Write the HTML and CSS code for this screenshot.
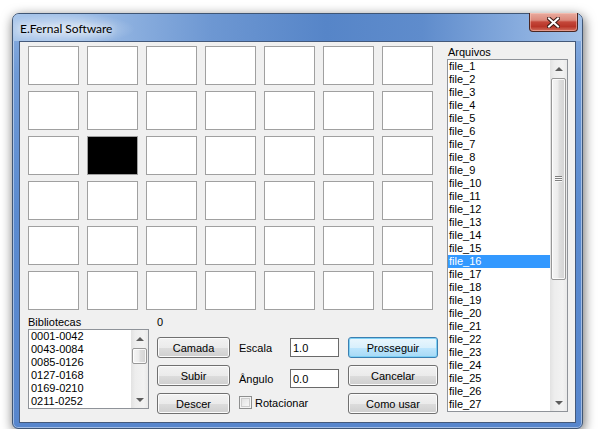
FILE: index.html
```html
<!DOCTYPE html>
<html lang="pt">
<head>
    <meta charset="UTF-8">
    <title>E.Fernal Software</title>
    <link rel="stylesheet" href="styles.css">
</head>
<body>
    <div class="window">
        <div class="titlebar">
            <span class="title">E.Fernal Software</span>
            <div class="close">
                <svg width="13" height="11" viewBox="0 0 13 11">
                    <path d="M2 1.5 L11 9.5 M11 1.5 L2 9.5" stroke="#3a1a16" stroke-width="4" stroke-linecap="square"/>
                    <path d="M2 1.5 L11 9.5 M11 1.5 L2 9.5" stroke="#ffffff" stroke-width="2" stroke-linecap="square"/>
                </svg>
            </div>
        </div>
        <div class="client">
            <div class="main">
                <div class="grid">
                    <div class="cell"></div><div class="cell"></div><div class="cell"></div><div class="cell"></div><div class="cell"></div><div class="cell"></div><div class="cell"></div>
                    <div class="cell"></div><div class="cell"></div><div class="cell"></div><div class="cell"></div><div class="cell"></div><div class="cell"></div><div class="cell"></div>
                    <div class="cell"></div><div class="cell filled"></div><div class="cell"></div><div class="cell"></div><div class="cell"></div><div class="cell"></div><div class="cell"></div>
                    <div class="cell"></div><div class="cell"></div><div class="cell"></div><div class="cell"></div><div class="cell"></div><div class="cell"></div><div class="cell"></div>
                    <div class="cell"></div><div class="cell"></div><div class="cell"></div><div class="cell"></div><div class="cell"></div><div class="cell"></div><div class="cell"></div>
                    <div class="cell"></div><div class="cell"></div><div class="cell"></div><div class="cell"></div><div class="cell"></div><div class="cell"></div><div class="cell"></div>
                </div>

                <div class="bottom">
                    <div class="libs">
                        <div class="label">Bibliotecas</div>
                        <div class="listbox libs-list">
                            <ul class="items">
                                <li>0001-0042</li>
                                <li>0043-0084</li>
                                <li>0085-0126</li>
                                <li>0127-0168</li>
                                <li>0169-0210</li>
                                <li>0211-0252</li>
                            </ul>
                            <div class="scrollbar">
                                <div class="arrow up"></div>
                                <div class="track"><div class="thumb libs-thumb"></div></div>
                                <div class="arrow down"></div>
                            </div>
                        </div>
                    </div>

                    <div class="controls">
                        <div class="label counter">0</div>
                        <div class="control-rows">
                            <div class="col buttons">
                                <button class="btn">Camada</button>
                                <button class="btn">Subir</button>
                                <button class="btn">Descer</button>
                            </div>
                            <div class="col fields">
                                <div class="field">
                                    <span class="field-label">Escala</span>
                                    <input class="textbox" type="text" value="1.0">
                                </div>
                                <div class="field angle">
                                    <span class="field-label">Ângulo</span>
                                    <input class="textbox" type="text" value="0.0">
                                </div>
                                <label class="field check">
                                    <span class="checkbox"></span>
                                    <span>Rotacionar</span>
                                </label>
                            </div>
                            <div class="col buttons wide">
                                <button class="btn default">Prosseguir</button>
                                <button class="btn">Cancelar</button>
                                <button class="btn">Como usar</button>
                            </div>
                        </div>
                    </div>
                </div>
            </div>

            <div class="files">
                <div class="label">Arquivos</div>
                <div class="listbox files-list">
                    <ul class="items">
                        <li>file_1</li>
                        <li>file_2</li>
                        <li>file_3</li>
                        <li>file_4</li>
                        <li>file_5</li>
                        <li>file_6</li>
                        <li>file_7</li>
                        <li>file_8</li>
                        <li>file_9</li>
                        <li>file_10</li>
                        <li>file_11</li>
                        <li>file_12</li>
                        <li>file_13</li>
                        <li>file_14</li>
                        <li>file_15</li>
                        <li class="selected">file_16</li>
                        <li>file_17</li>
                        <li>file_18</li>
                        <li>file_19</li>
                        <li>file_20</li>
                        <li>file_21</li>
                        <li>file_22</li>
                        <li>file_23</li>
                        <li>file_24</li>
                        <li>file_25</li>
                        <li>file_26</li>
                        <li>file_27</li>
                    </ul>
                    <div class="scrollbar">
                        <div class="arrow up"></div>
                        <div class="track"><div class="thumb files-thumb"><span class="grip"></span></div></div>
                        <div class="arrow down"></div>
                    </div>
                </div>
            </div>
        </div>
    </div>
</body>
</html>
```

FILE: styles.css
```css
* {
    margin: 0;
    padding: 0;
    box-sizing: border-box;
}

body {
    background: #ffffff;
    font-family: 'Liberation Sans', Arial, sans-serif;
    font-size: 11px;
    color: #000;
}

/* window frame */
.window {
    margin: 13px 0 0 12px;
    width: 571px;
    height: 416px;
    padding: 0 6px 5px 6px;
    border: 1px solid #3f5675;
    border-radius: 7px 7px 6px 6px;
    background: linear-gradient(to bottom, #8fb2e2 0px, #6f9ad6 60px, #5b8bd0 200px, #5786cd 100%);
    box-shadow: inset 0 0 0 1px rgba(255, 255, 255, 0.45), 1px 3px 12px rgba(0, 0, 0, 0.6);
}

.titlebar {
    height: 27px;
    margin: 0 -6px;
    padding-left: 7px;
    display: flex;
    align-items: flex-start;
    justify-content: space-between;
    border-radius: 6px 6px 0 0;
    background:
        radial-gradient(ellipse 70px 16px at 52px 15px, rgba(255, 255, 255, 0.55), rgba(255, 255, 255, 0) 100%),
        linear-gradient(to right, #a9c6ea 0%, #9dbde6 12%, #6d97d2 35%, #5685c8 55%, #5f8ccc 72%, #8aaedf 90%, #a3c1e8 100%);
}

.title {
    font-family: 'Lato', 'Noto Sans', sans-serif;
    font-size: 12px;
    line-height: 16px;
    margin-top: 7px;
    color: #000;
    text-shadow: 0 0 6px rgba(255, 255, 255, 0.9), 0 0 10px rgba(255, 255, 255, 0.7);
}

.close {
    width: 49px;
    height: 19px;
    margin-top: -1px;
    margin-right: 4px;
    display: flex;
    align-items: center;
    justify-content: center;
    border: 1px solid #4a2622;
    border-top: none;
    border-radius: 0 0 4px 4px;
    background: linear-gradient(to bottom, #e9ab9f 0%, #dc8a7c 40%, #c4473a 50%, #b83528 75%, #d2705f 100%);
    box-shadow: inset 0 0 0 1px rgba(255, 210, 200, 0.45);
}

.close svg {
    display: block;
}

.client {
    height: 382px;
    display: flex;
    border: 1px solid #44597a;
    background: #f0f0f0;
}

/* picture grid + bottom controls */
.main {
    padding: 4px 0 0 8px;
}

.grid {
    display: grid;
    grid-template-columns: repeat(7, 51px);
    grid-auto-rows: 39px;
    column-gap: 8px;
    row-gap: 6px;
}

.cell {
    background: #fff;
    border: 1px solid #a0a0a0;
}

.cell.filled {
    background: #000;
}

.label {
    height: 13px;
    line-height: 13px;
}

.bottom {
    display: flex;
    margin-top: 6px;
}

.libs {
    width: 121px;
    margin-right: 8px;
}

/* list boxes */
.listbox {
    display: flex;
    background: #fff;
    border: 1px solid #8f9399;
    overflow: hidden;
}

.libs-list {
    height: 80px;
}

.items {
    list-style: none;
    flex: 1;
    overflow: hidden;
}

.items li {
    height: 13px;
    line-height: 13px;
    padding-left: 1px;
    white-space: nowrap;
}

.libs-list .items li {
    padding-left: 2px;
}

.items li.selected {
    background: #3399ff;
    color: #fff;
}

.scrollbar {
    width: 17px;
    display: flex;
    flex-direction: column;
    background: linear-gradient(to right, #e2e2e2 0%, #ededed 25%, #f2f2f2 75%, #e9e9e9 100%);
}

.arrow {
    height: 17px;
    display: flex;
    align-items: center;
    justify-content: center;
}

.arrow::before {
    content: '';
    border-left: 4px solid transparent;
    border-right: 4px solid transparent;
}

.arrow.up::before {
    border-bottom: 4px solid #5c5c5c;
}

.arrow.down::before {
    border-top: 4px solid #5c5c5c;
}

.track {
    flex: 1;
    padding: 1px 1px 0 1px;
}

.thumb {
    display: flex;
    align-items: center;
    justify-content: center;
    border: 1px solid #979797;
    border-radius: 2px;
    background: linear-gradient(to right, #f5f5f5 0%, #ececec 45%, #dedede 55%, #d3d3d3 100%);
    box-shadow: inset 0 0 0 1px rgba(255, 255, 255, 0.8);
}

.libs-thumb {
    height: 16px;
}

.files-thumb {
    height: 202px;
}

.grip {
    width: 7px;
    height: 6px;
    background: repeating-linear-gradient(to bottom, #7f7f7f 0px, #7f7f7f 1px, #f8f8f8 1px, #f8f8f8 2px);
}

/* controls */
.controls {
    display: flex;
    flex-direction: column;
}

.counter {
    margin-bottom: 8px;
}

.control-rows {
    display: flex;
    gap: 9px;
}

.col {
    display: flex;
    flex-direction: column;
}

.buttons {
    width: 73px;
    gap: 7px;
}

.buttons.wide {
    width: 90px;
}

.btn {
    height: 21px;
    font-family: 'Liberation Sans', Arial, sans-serif;
    font-size: 11px;
    color: #000;
    border: 1px solid #707070;
    border-radius: 3px;
    background: linear-gradient(to bottom, #f2f2f2 0%, #ebebeb 50%, #dddddd 51%, #cfcfcf 100%);
    box-shadow: inset 0 0 0 1px #fbfbfb;
}

.btn.default {
    border-color: #3c7fb1;
    background: linear-gradient(to bottom, #eaf6fd 0%, #d9f0fc 50%, #bee6fd 51%, #a7d9f5 100%);
    box-shadow: inset 0 0 0 1px #7fd1f5;
}

.fields {
    width: 100px;
}

.field {
    height: 21px;
    display: flex;
    align-items: center;
}

.field.angle {
    margin-top: 10px;
}

.field.check {
    margin-top: 3px;
    gap: 3px;
}

.field-label {
    width: 51px;
}

.textbox {
    width: 49px;
    height: 19px;
    padding-left: 2px;
    font-family: 'Liberation Sans', Arial, sans-serif;
    font-size: 11px;
    color: #000;
    background: #fff;
    border: 1px solid #6a6a6a;
    outline: none;
}

.checkbox {
    width: 13px;
    height: 13px;
    border: 1px solid #8e8f8f;
    background: linear-gradient(135deg, #dcdcdc 0%, #f0f0f0 60%, #fbfbfb 100%);
    box-shadow: inset 0 0 0 1px #f4f4f4, inset 0 0 0 2px #cdcdcd;
}

/* file list */
.files {
    margin: 4px 0 0 9px;
}

.files .label {
    padding-left: 1px;
}

.files-list {
    width: 121px;
    height: 353px;
}
```
